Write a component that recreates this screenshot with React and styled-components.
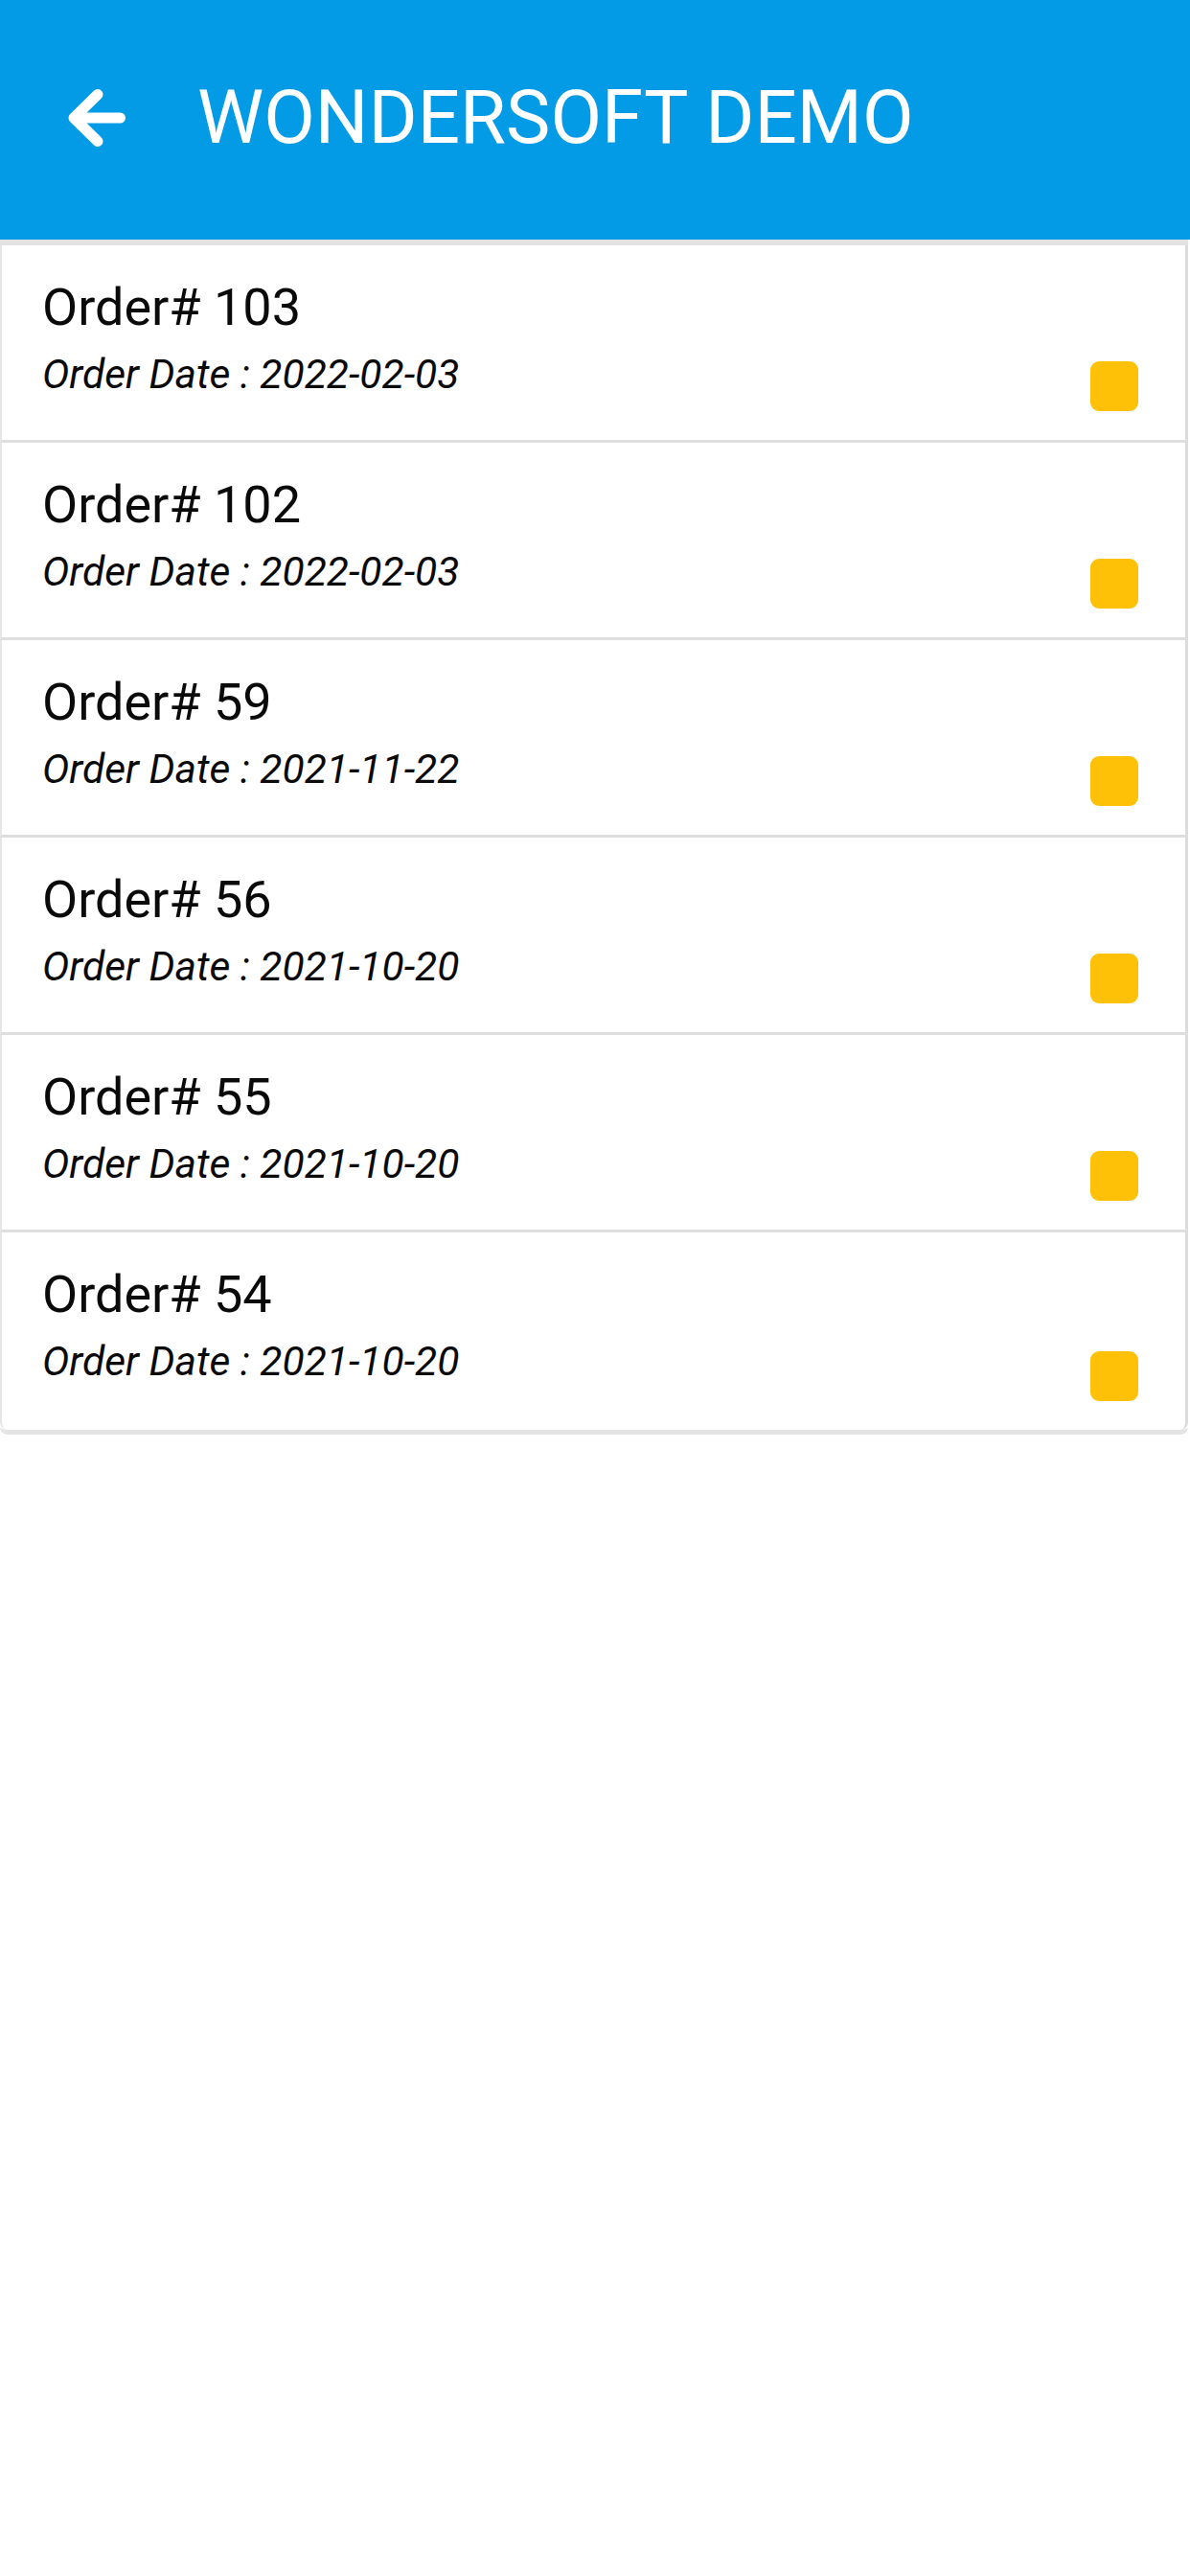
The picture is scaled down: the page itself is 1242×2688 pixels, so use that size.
import React from 'react';
import styled, { createGlobalStyle } from 'styled-components';

const GlobalStyle = createGlobalStyle`
  body {
    margin: 0;
    background: #ffffff;
    font-family: Roboto, "Noto Sans", sans-serif;
  }
`;

const Header = styled.header`
  box-sizing: border-box;
  height: 250px;
  background: #039be5;
  display: flex;
  align-items: center;
  padding: 0 0 4px 69px;
`;

const BackIcon = styled.svg`
  width: 64px;
  height: 64px;
  flex-shrink: 0;
`;

const Title = styled.h1`
  margin: 0 0 0 73px;
  font-family: Roboto, sans-serif;
  font-weight: 400;
  font-size: 78px;
  line-height: 1;
  color: #ffffff;
`;

const List = styled.div`
  margin-right: 2px;
  border-top: 6px solid #e2e2e2;
  border-bottom: 5px solid #e4e4e4;
  border-radius: 0 0 8px 8px;
`;

const Row = styled.div`
  box-sizing: border-box;
  height: 206px;
  display: flex;
  justify-content: space-between;
  align-items: flex-end;
  padding: 34px 49px 30px 42px;
  border-left: 2px solid #e6e6e6;
  border-right: 3px solid #dcdcdc;
  border-bottom: ${(p) => (p.last ? '0' : '3px solid #dedede')};
  border-radius: ${(p) => (p.last ? '0 0 8px 8px' : '0')};
`;

const Info = styled.div`
  align-self: flex-start;
  display: flex;
  flex-direction: column;
`;

const OrderNo = styled.div`
  font-size: 54px;
  line-height: 62px;
  color: #0a0a0a;
`;

const OrderDate = styled.div`
  margin-top: 15px;
  font-size: 42.5px;
  font-style: italic;
  line-height: 48px;
  color: #0a0a0a;
`;

const Status = styled.span`
  width: 50px;
  height: 52px;
  border-radius: 9px;
  background: ${(p) => p.color};
`;

const orders = [
  { id: 103, date: '2022-02-03' },
  { id: 102, date: '2022-02-03' },
  { id: 59, date: '2021-11-22' },
  { id: 56, date: '2021-10-20' },
  { id: 55, date: '2021-10-20' },
  { id: 54, date: '2021-10-20' },
];

export default function App() {
  return (
    <>
      <GlobalStyle />
      <Header>
        <BackIcon viewBox="0 0 64 64">
          <path
            d="M56.5 32H8M33 7.5L8 32l25 24.5"
            fill="none"
            stroke="#ffffff"
            strokeWidth="11"
            strokeLinecap="round"
            strokeLinejoin="round"
          />
        </BackIcon>
        <Title>WONDERSOFT DEMO</Title>
      </Header>
      <List>
        {orders.map((o, i) => (
          <Row key={o.id} last={i === orders.length - 1}>
            <Info>
              <OrderNo>Order# {o.id}</OrderNo>
              <OrderDate>Order Date : {o.date}</OrderDate>
            </Info>
            <Status color="#ffc107" />
          </Row>
        ))}
      </List>
    </>
  );
}
